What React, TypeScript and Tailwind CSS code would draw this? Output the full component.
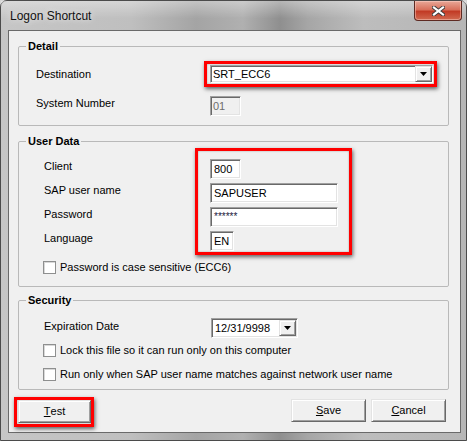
import React from "react";

// classic win32 bevels
const sunken =
    "border border-t-[#a0a0a0] border-l-[#a0a0a0] border-r-white border-b-white shadow-[inset_1px_1px_0_#696969,inset_-1px_-1px_0_#e3e3e3]";
const raised =
    "bg-[#f0f0f0] border border-t-[#e3e3e3] border-l-[#e3e3e3] border-r-[#696969] border-b-[#696969] shadow-[inset_1px_1px_0_#ffffff,inset_-1px_-1px_0_#a0a0a0]";
const redBox =
    "border-[3px] border-[#ff0000] shadow-[1px_2px_4px_rgba(0,0,0,0.6),inset_0_0_2px_rgba(0,0,0,0.35)]";

function DropArrow() {
    return (
        <svg width="7" height="4" viewBox="0 0 7 4">
            <path d="M0 0h7L3.5 4z" fill="#000" />
        </svg>
    );
}

function ComboBox({ value, className }: { value: string; className: string }) {
    return (
        <div className={`flex items-center justify-between bg-white ${sunken} ${className}`}>
            <span className="leading-[15px]">{value}</span>
            <div className={`flex h-[16px] w-[17px] items-center justify-center ${raised}`}>
                <DropArrow />
            </div>
        </div>
    );
}

function TextBox({ value, className }: { value: string; className: string }) {
    return (
        <div className={`flex h-[20px] items-center bg-white pl-[3px] leading-[15px] ${sunken} ${className}`}>
            {value}
        </div>
    );
}

function CheckBox({ label }: { label: string }) {
    return (
        <div className="flex items-center gap-[4px]">
            <span className="h-[13px] w-[13px] border border-[#8e8f8f] bg-white shadow-[inset_1px_1px_0_#d8d8d8]" />
            <span className="leading-[15px]">{label}</span>
        </div>
    );
}

function GroupBox({ title, className, children }: { title: string; className: string; children: React.ReactNode }) {
    return (
        <fieldset className={`w-[431px] rounded-[2px] border border-[#b9b9b9] ${className}`}>
            <legend className="ml-[7px] px-[2px] font-bold leading-[13px]">{title}</legend>
            {children}
        </fieldset>
    );
}

function PushButton({ children, className }: { children: React.ReactNode; className: string }) {
    return (
        <button type="button" className={`flex h-[23px] items-center justify-center leading-[15px] ${raised} ${className}`}>
            {children}
        </button>
    );
}

export default function App() {
    return (
        <div className="h-[441px] w-[467px] bg-[#d6d6d6] font-['Liberation_Sans',Arial,sans-serif] text-[11px] text-black">
            <div className="flex h-[441px] w-[467px] flex-col rounded-t-[7px] border border-[#4b4b4b] bg-[linear-gradient(90deg,#c6c6c6_0%,#bfbfbf_28%,#a4a4a4_42%,#b0b0b0_52%,#8f8f8f_60%,#a6a6a6_66%,#bdbdbd_78%,#b6b6b6_100%)]">
                {/* title bar */}
                <div className="flex h-[29px] shrink-0 items-start justify-between bg-[linear-gradient(180deg,rgba(255,255,255,0.35),rgba(255,255,255,0)_60%)]">
                    <span className="ml-[9px] mt-[8px] text-[12px] leading-[15px] text-[#111] [text-shadow:0_0_6px_rgba(255,255,255,0.9)]">
                        Logon Shortcut
                    </span>
                    <div className="mr-[4px] flex h-[20px] w-[48px] items-center justify-center rounded-b-[4px] border border-t-0 border-[#5e2a22] bg-[linear-gradient(180deg,#e8a898_0%,#d8715c_45%,#c23b25_55%,#d16a50_100%)] shadow-[inset_0_0_0_1px_rgba(255,220,210,0.45)]">
                        <svg width="13" height="10" viewBox="0 0 13 10">
                            <path d="M2 1.5l9 7M11 1.5l-9 7" stroke="#3b3b3b" strokeWidth="4" strokeLinecap="square" />
                            <path d="M2 1.5l9 7M11 1.5l-9 7" stroke="#ffffff" strokeWidth="2.2" strokeLinecap="square" />
                        </svg>
                    </div>
                </div>

                {/* client area */}
                <div className="ml-[7px] mr-[5px] flex h-[403px] shrink-0 flex-col border border-[#6a6a6a] bg-[#f0f0f0] pl-[9px]">
                    <GroupBox title="Detail" className="mt-[9px] pb-[9px]">
                        <div className="mt-[8px] flex items-center pl-[17px]">
                            <span className="w-[168px] leading-[15px]">Destination</span>
                            <div className={`py-px pl-[3px] pr-px ${redBox}`}>
                                <ComboBox value="SRT_ECC6" className="h-[18px] w-[223px] pl-[2px]" />
                            </div>
                        </div>
                        <div className="mt-[9px] flex items-start pl-[17px]">
                            <span className="w-[174px] leading-[15px]">System Number</span>
                            <div className={`flex h-[20px] w-[31px] items-center bg-[#f0f0f0] pl-[2px] leading-[15px] text-[#6d6d6d] ${sunken}`}>
                                01
                            </div>
                        </div>
                    </GroupBox>

                    <GroupBox title="User Data" className="mt-[9px] pb-[11px]">
                        <div className="flex items-start pl-[25px]">
                            <div className="flex w-[151px] flex-col pt-[11px]">
                                <span className="h-[24px] leading-[15px]">Client</span>
                                <span className="h-[24px] leading-[15px]">SAP user name</span>
                                <span className="h-[24px] leading-[15px]">Password</span>
                                <span className="h-[24px] leading-[15px]">Language</span>
                            </div>
                            <div className={`flex w-[157px] flex-col gap-[4px] pb-px pl-[12px] pt-[8px] ${redBox}`}>
                                <TextBox value="800" className="w-[31px]" />
                                <TextBox value="SAPUSER" className="w-[128px]" />
                                <TextBox value="******" className="w-[128px] items-start pt-[1px] text-[10px] text-[#1a1a40]" />
                                <TextBox value="EN" className="w-[24px]" />
                            </div>
                        </div>
                        <div className="mt-[5px] pl-[24px]">
                            <CheckBox label="Password is case sensitive (ECC6)" />
                        </div>
                    </GroupBox>

                    <GroupBox title="Security" className="mt-[7px] pb-[3px]">
                        <div className="mt-[11px] flex items-start pl-[25px]">
                            <span className="mt-[1px] w-[167px] leading-[15px]">Expiration Date</span>
                            <ComboBox value="12/31/9998" className="h-[20px] w-[87px] pl-[3px] pr-[1px]" />
                        </div>
                        <div className="flex h-[24px] items-center pl-[24px]">
                            <CheckBox label="Lock this file so it can run only on this computer" />
                        </div>
                        <div className="flex h-[24px] items-center pl-[24px]">
                            <CheckBox label="Run only when SAP user name matches against network user name" />
                        </div>
                    </GroupBox>

                    <div className="mt-[7px] flex items-start pr-[14px]">
                        <div className={`-ml-[4px] pb-px pl-px ${redBox}`}>
                            <PushButton className="w-[73px]">
                                <u>T</u>est
                            </PushButton>
                        </div>
                        <div className="ml-auto mt-[2px] flex gap-[5px]">
                            <PushButton className="w-[75px]">
                                <u>S</u>ave
                            </PushButton>
                            <PushButton className="w-[75px]">
                                <u>C</u>ancel
                            </PushButton>
                        </div>
                    </div>
                </div>
            </div>
        </div>
    );
}
